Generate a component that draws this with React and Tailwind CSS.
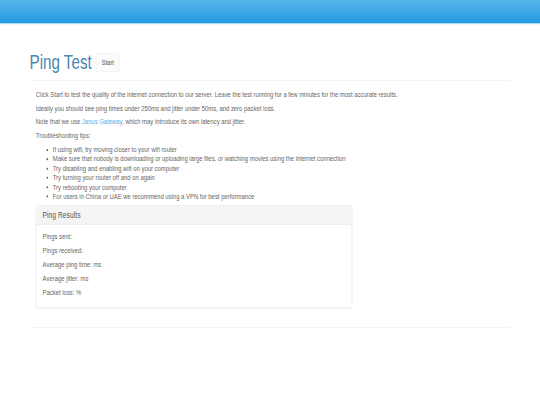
export default function App() {
  const tips = [
    "If using wifi, try moving closer to your wifi router",
    "Make sure that nobody is downloading or uploading large files, or watching movies using the internet connection",
    "Try disabling and enabling wifi on your computer",
    "Try turning your router off and on again",
    "Try rebooting your computer",
    "For users in China or UAE we recommend using a VPN for best performance",
  ];
  const results = ["Pings sent:", "Pings received:", "Average ping time: ms", "Average jitter: ms", "Packet loss: %"];
  return (
    <div className="h-[405px] w-[540px] overflow-hidden bg-white">
      <div className="h-[720px] w-[1280px] origin-top-left [transform:scale(0.421875,0.5625)] font-['Liberation_Sans',Arial,sans-serif] text-[14px] text-[#666666]">
        <div className="h-[43px] border-b-2 border-b-[#a8dcf7] bg-gradient-to-b from-[#56b6ec] to-[#209ae3]" />
        <div className="mx-auto w-[1140px] pt-[52px]">
          <div className="flex items-center gap-[10px] border-b border-[#eeeeee] pb-[15px]">
            <h1 className="-mt-[3px] text-[36px] leading-[33px] font-normal text-[#4a86b0]">Ping Test</h1>
            <button className="h-[33px] w-[56px] rounded-[3px] border border-[#e8e8e8] bg-[#fbfbfb] text-[14px] text-[#555555]">Start</button>
          </div>
          <div className="px-[15px] pt-[15px]">
            <p className="mb-[8.2px] leading-[16.5px]">Click Start to test the quality of the internet connection to our server. Leave the test running for a few minutes for the most accurate results.</p>
            <p className="mb-[8.2px] leading-[16.5px]">Ideally you should see ping times under 250ms and jitter under 50ms, and zero packet loss.</p>
            <p className="mb-[8.2px] leading-[16.5px]">Note that we use <a className="text-[#5aaee6]">Janus Gateway</a>, which may introduce its own latency and jitter.</p>
            <p className="mb-[8.2px] leading-[16.5px]">Troubleshooting tips:</p>
            <ul className="list-disc pl-[40px] leading-[16.5px]">
              {tips.map((t) => <li key={t}>{t}</li>)}
            </ul>
            <div className="mt-[8px] h-[183px] w-[750px] rounded-[4px] border border-[#dddddd] shadow-[0_1px_1px_rgba(0,0,0,0.05)]">
              <div className="flex h-[33px] items-center border-b border-[#dddddd] bg-[#f5f5f5] px-[15px] text-[16px] text-[#555555]">Ping Results</div>
              <div className="px-[15px] pt-[13px]">
                {results.map((r) => <p key={r} className="mb-[8.2px] leading-[16.5px]">{r}</p>)}
              </div>
            </div>
          </div>
          <div className="mt-[34px] border-t border-[#eeeeee]" />
        </div>
      </div>
    </div>
  );
}
